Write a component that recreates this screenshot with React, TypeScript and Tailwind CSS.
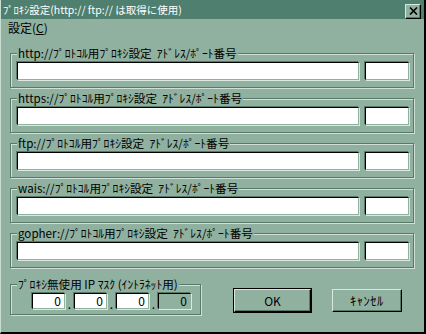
import React from 'react'

const FONT = "font-['Noto_Sans_CJK_JP',sans-serif]"

const groups = ['http', 'https', 'ftp', 'wais', 'gopher']

// sunken white edit box
const edit =
  'bg-white border border-t-black border-l-black border-r-[#90b0a0] border-b-[#90b0a0] shadow-[-1px_-1px_0_#587868,1px_1px_0_#dce9e2]'

function ProxyGroup({ scheme }: { scheme: string }) {
  return (
    <fieldset className="w-[404px] border border-[#587868] shadow-[inset_1px_1px_0_#d0e0d8,1px_1px_0_#d0e0d8] pl-[6px] pr-[4px] pb-[7px]">
      <legend className="ml-0 px-[1px] bg-[#90b0a0] text-[11.6px] leading-[14px] whitespace-pre">
        {scheme}://ﾌﾟﾛﾄｺﾙ用ﾌﾟﾛｷｼ設定  ｱﾄﾞﾚｽ/ﾎﾟｰﾄ番号
      </legend>
      <div className="flex gap-[6px] mt-[2px]">
        <div className={`w-[342px] h-[18px] ${edit}`} />
        <div className={`w-[44px] h-[18px] ${edit}`} />
      </div>
    </fieldset>
  )
}

export default function App() {
  return (
    <div className={`${FONT} w-[426px] h-[334px] bg-[#90b0a0] text-black border-l border-l-[#c8dcd0] border-r-2 border-b-2 border-r-black border-b-black flex flex-col overflow-hidden`}>
      {/* title bar */}
      <div className="h-[19px] -ml-px bg-[#4f7f6f] flex items-center justify-between pl-[3px] pr-[3px] shrink-0">
        <span className="text-[10.5px] leading-[14px] text-white whitespace-nowrap">ﾌﾟﾛｷｼ設定(http:// ftp:// は取得に使用)</span>
        <button className="w-[16px] h-[15px] mt-[3px] bg-[#90b0a0] border border-t-[#d8e8e0] border-l-[#d8e8e0] border-r-black border-b-black shadow-[inset_-1px_-1px_0_#587868] flex items-center justify-center">
          <svg width="9" height="8" viewBox="0 0 9 8">
            <path d="M1 0.5 L8 7.5 M8 0.5 L1 7.5" stroke="#000" strokeWidth="1.6" />
          </svg>
        </button>
      </div>

      {/* menu */}
      <div className="h-[27px] pl-[7px] pt-[2px] text-[12px] leading-[14px] shrink-0">
        設定(<span className="underline">C</span>)
      </div>

      {/* proxy groups */}
      <div className="pl-[9px] flex flex-col gap-[3px]">
        {groups.map(g => <ProxyGroup key={g} scheme={g} />)}
      </div>

      {/* bottom row */}
      <div className="flex pl-[9px] mt-[9px]">
        <fieldset className="w-[191px] border border-[#587868] shadow-[inset_1px_1px_0_#d0e0d8,1px_1px_0_#d0e0d8] pl-[21px] pb-[5px]">
          <legend className="-ml-[15px] px-[1px] bg-[#90b0a0] text-[11.6px] leading-[14px] whitespace-nowrap">
            ﾌﾟﾛｷｼ無使用 IP ﾏｽｸ (ｲﾝﾄﾗﾈｯﾄ用)
          </legend>
          <div className="flex items-end mt-[2px] text-[12px] leading-[14px]">
            {[0, 1, 2, 3].map(i => (
              <React.Fragment key={i}>
                {i > 0 && <span className="w-[9px] text-center leading-[10px]">.</span>}
                <div
                  className={`w-[33px] h-[16px] flex items-center justify-end pr-[3px] ${
                    i === 3
                      ? 'bg-[#90b0a0] border border-t-black border-l-black border-r-[#90b0a0] border-b-[#90b0a0] shadow-[-1px_-1px_0_#587868,1px_1px_0_#dce9e2]'
                      : edit
                  }`}
                >
                  0
                </div>
              </React.Fragment>
            ))}
          </div>
        </fieldset>

        <button className="ml-[33px] mt-[12px] w-[77px] h-[23px] bg-[#90b0a0] border border-t-[#d8e8e0] border-l-[#d8e8e0] border-r-black border-b-black shadow-[inset_-1px_-1px_0_#587868,0_0_0_1px_#000] text-[12px] leading-[14px]">
          OK
        </button>
        <button className="ml-[21px] mt-[12px] w-[70px] h-[23px] bg-[#90b0a0] border border-t-[#d8e8e0] border-l-[#d8e8e0] border-r-black border-b-black shadow-[inset_-1px_-1px_0_#587868] text-[12.5px] leading-[14px] tracking-[0.5px]">
          ｷｬﾝｾﾙ
        </button>
      </div>
    </div>
  )
}
